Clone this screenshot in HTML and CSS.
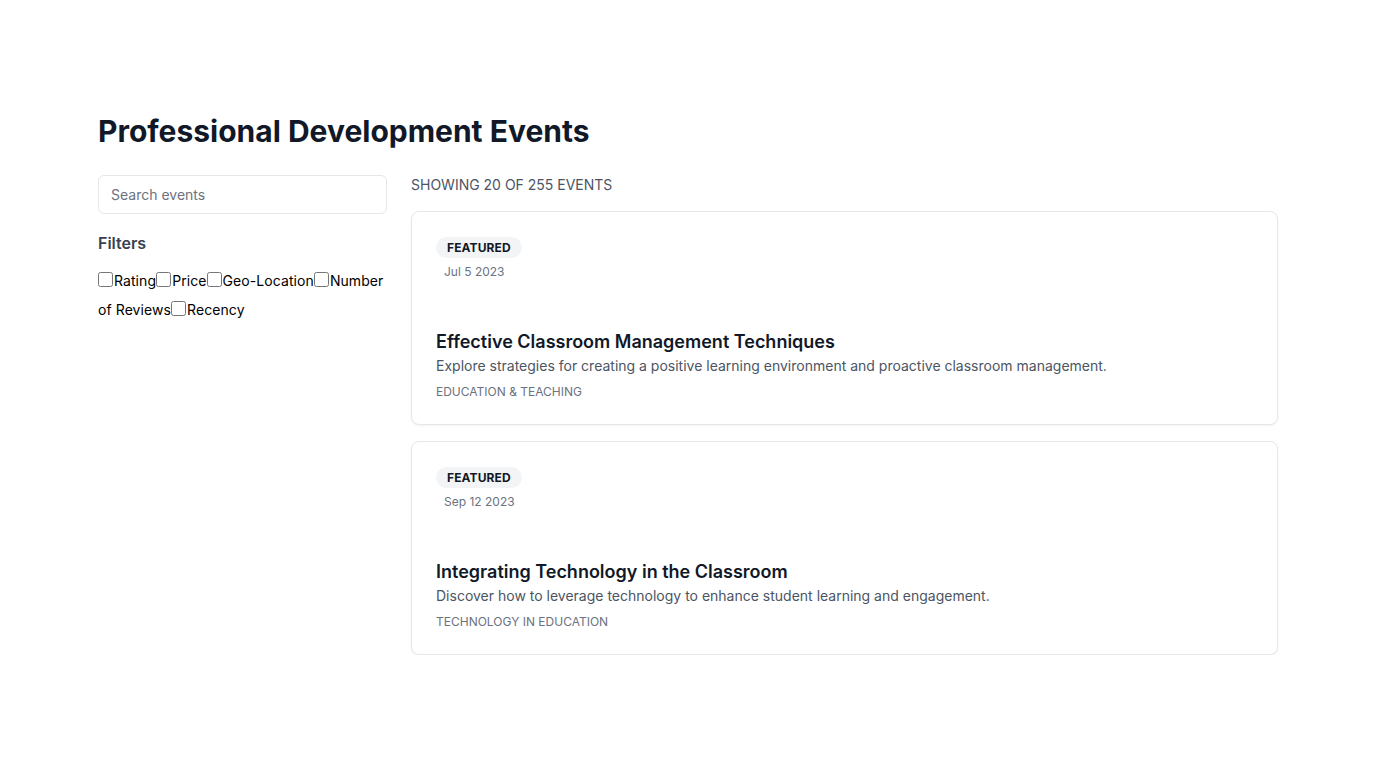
FILE: index.html
```html
<!DOCTYPE html>
<html lang="en">
<head>
<meta charset="utf-8">
<title>Professional Development Events</title>
<link rel="stylesheet" href="styles.css">
</head>
<body>
<div class="page">
  <h1 class="page-title">Professional Development Events</h1>
  <div class="layout">
    <aside class="sidebar">
      <input class="search" type="text" placeholder="Search events">
      <h2 class="filters-title">Filters</h2>
      <div class="filters"><label><input type="checkbox">Rating</label><label><input type="checkbox">Price</label><label><input type="checkbox">Geo-Location</label><label><input type="checkbox">Number of Reviews</label><label><input type="checkbox">Recency</label></div>
    </aside>
    <main class="results">
      <p class="count">Showing 20 of 255 events</p>
      <div class="cards">
        <article class="card">
          <span class="badge">Featured</span>
          <div class="date">Jul 5 2023</div>
          <h3 class="card-title">Effective Classroom Management Techniques</h3>
          <p class="card-desc">Explore strategies for creating a positive learning environment and proactive classroom management.</p>
          <div class="card-cat">Education &amp; Teaching</div>
        </article>
        <article class="card">
          <span class="badge">Featured</span>
          <div class="date">Sep 12 2023</div>
          <h3 class="card-title">Integrating Technology in the Classroom</h3>
          <p class="card-desc">Discover how to leverage technology to enhance student learning and engagement.</p>
          <div class="card-cat">Technology in Education</div>
        </article>
      </div>
    </main>
  </div>
</div>
</body>
</html>
```

FILE: styles.css
```css
* { box-sizing: border-box; }
html, body { margin: 0; padding: 0; background: #fff; }
body {
  font-family: Inter, "Liberation Sans", sans-serif;
  color: #111827;
}
.page {
  width: 1180px;
  margin: 0 auto;
  padding-top: 113px;
}
.page-title {
  margin: 0 0 25px;
  font-size: 30px;
  line-height: 36px;
  font-weight: 700;
  color: #111827;
}
.layout {
  display: grid;
  grid-template-columns: 1fr 3fr;
  gap: 24px;
}
.search {
  display: block;
  width: 100%;
  height: 39px;
  margin-top: 1px;
  padding: 0 12px;
  border: 1px solid #e5e7eb;
  border-radius: 6px;
  font-family: inherit;
  font-size: 14px;
  color: #111827;
  outline: none;
}
.search::placeholder { color: #6b7280; }
.filters-title {
  margin: 17px 0 0;
  font-size: 16px;
  line-height: 24px;
  font-weight: 600;
  color: #374151;
}
.filters {
  margin-top: 11px;
  font-size: 14px;
  line-height: 29px;
  letter-spacing: 0.08px;
  color: #000;
}
.filters input[type="checkbox"] {
  margin: 0 1px 0 0;
  width: 15px;
  height: 15px;
  vertical-align: -1px;
}
.count {
  margin: 1px 0 16px;
  font-size: 14px;
  line-height: 20px;
  text-transform: uppercase;
  color: #4b5563;
}
.cards {
  display: flex;
  flex-direction: column;
  gap: 16px;
}
.card {
  border: 1px solid #e5e7eb;
  border-radius: 8px;
  padding: 24px;
  box-shadow: 0 1px 2px rgba(0,0,0,0.05);
  background: #fff;
}
.badge {
  display: inline-block;
  padding: 2px 11px;
  border-radius: 999px;
  background: #f3f4f6;
  font-size: 12px;
  line-height: 17px;
  font-weight: 700;
  text-transform: uppercase;
  color: #111827;
  letter-spacing: 0.1px;
}
.date {
  margin-top: 6px;
  padding-left: 8px;
  font-size: 12px;
  line-height: 16px;
  color: #6b7280;
}
.card-title {
  margin: 48px 0 0;
  font-size: 18px;
  line-height: 28px;
  font-weight: 600;
  color: #111827;
}
.card-desc {
  margin: 0;
  font-size: 14px;
  line-height: 20px;
  color: #4b5563;
}
.card-cat {
  margin-top: 8px;
  font-size: 12px;
  line-height: 16px;
  text-transform: uppercase;
  color: #6b7280;
}
```
